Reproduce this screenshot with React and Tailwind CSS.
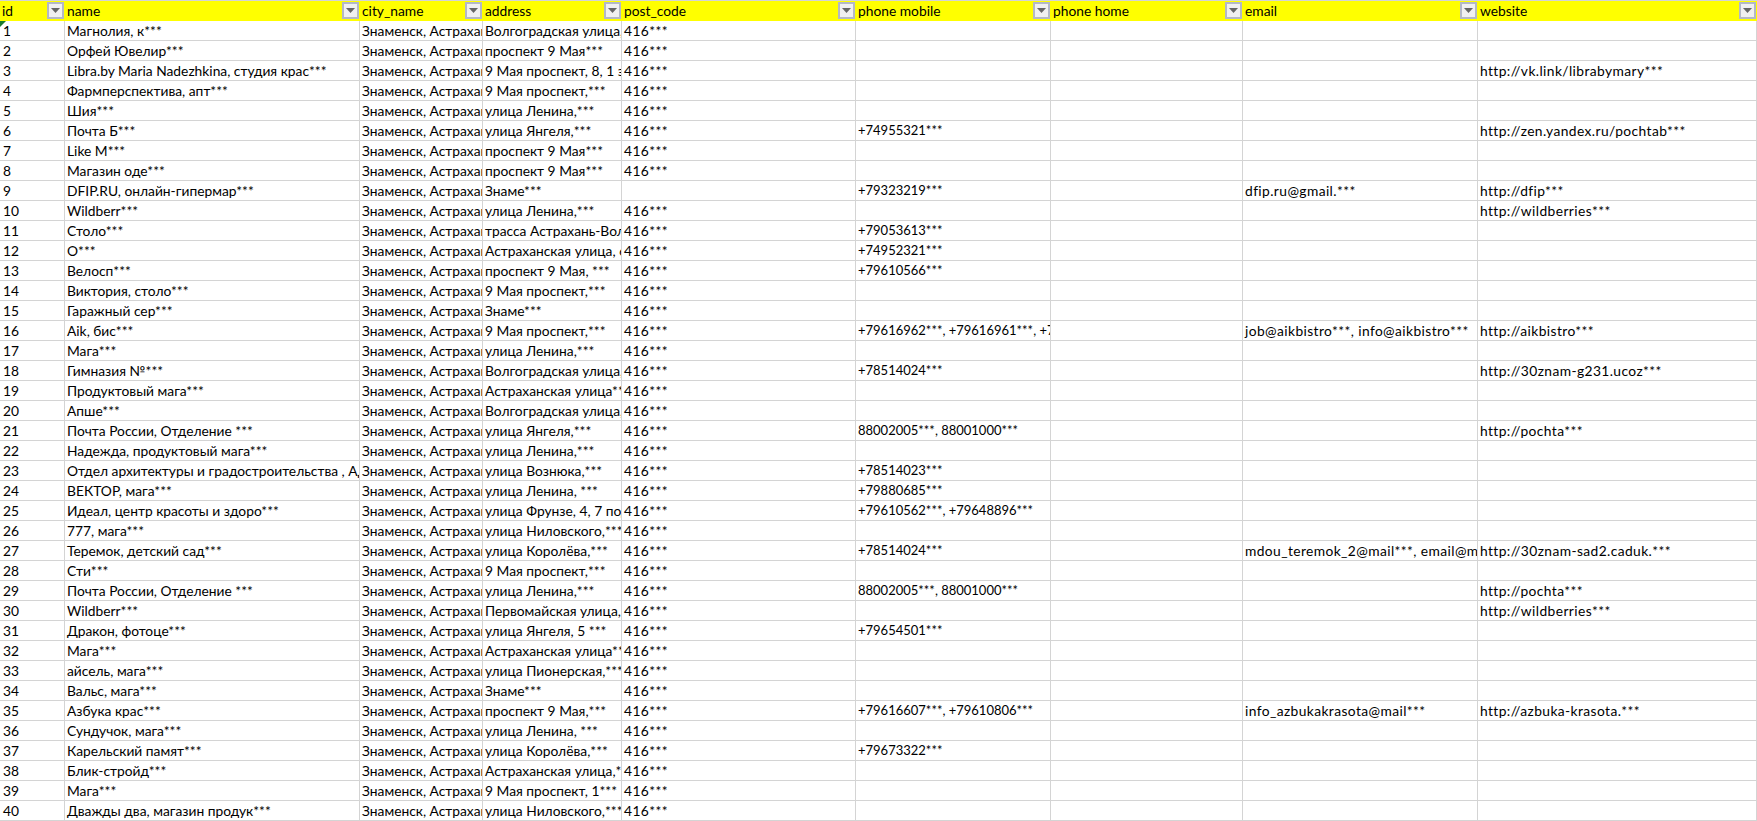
const cols = [
  ['id', 65],
  ['name', 295],
  ['city_name', 123],
  ['address', 139],
  ['post_code', 234],
  ['phone mobile', 195],
  ['phone home', 192],
  ['email', 235],
  ['website', 279],
];

const CITY = 'Знаменск, Астраханская область';

// name, address, post, mobile, email, website
const rows = [
  ['Магнолия, к***', 'Волгоградская улица,***', '416***', '', '', ''],
  ['Орфей Ювелир***', 'проспект 9 Мая***', '416***', '', '', ''],
  ['Libra.by Maria Nadezhkina, студия крас***', '9 Мая проспект, 8, 1 этаж***', '416***', '', '', 'http://vk.link/librabymary***'],
  ['Фармперспектива, апт***', '9 Мая проспект,***', '416***', '', '', ''],
  ['Шия***', 'улица Ленина,***', '416***', '', '', ''],
  ['Почта Б***', 'улица Янгеля,***', '416***', '+74955321***', '', 'http://zen.yandex.ru/pochtab***'],
  ['Like M***', 'проспект 9 Мая***', '416***', '', '', ''],
  ['Магазин оде***', 'проспект 9 Мая***', '416***', '', '', ''],
  ['DFIP.RU, онлайн-гипермар***', 'Знаме***', '', '+79323219***', 'dfip.ru@gmail.***', 'http://dfip***'],
  ['Wildberr***', 'улица Ленина,***', '416***', '', '', 'http://wildberries***'],
  ['Столо***', 'трасса Астрахань-Волгоград***', '416***', '+79053613***', '', ''],
  ['О***', 'Астраханская улица, 6***', '416***', '+74952321***', '', ''],
  ['Велосп***', 'проспект 9 Мая, ***', '416***', '+79610566***', '', ''],
  ['Виктория, столо***', '9 Мая проспект,***', '416***', '', '', ''],
  ['Гаражный сер***', 'Знаме***', '416***', '', '', ''],
  ['Aik, бис***', '9 Мая проспект,***', '416***', '+79616962***, +79616961***, +79***', 'job@aikbistro***, info@aikbistro***', 'http://aikbistro***'],
  ['Мага***', 'улица Ленина,***', '416***', '', '', ''],
  ['Гимназия №***', 'Волгоградская улица,***', '416***', '+78514024***', '', 'http://30znam-g231.ucoz***'],
  ['Продуктовый мага***', 'Астраханская улица***', '416***', '', '', ''],
  ['Апше***', 'Волгоградская улица,***', '416***', '', '', ''],
  ['Почта России, Отделение ***', 'улица Янгеля,***', '416***', '88002005***, 88001000***', '', 'http://pochta***'],
  ['Надежда, продуктовый мага***', 'улица Ленина,***', '416***', '', '', ''],
  ['Отдел архитектуры и градостроительства , Администрация', 'улица Вознюка,***', '416***', '+78514023***', '', ''],
  ['ВЕКТОР, мага***', 'улица Ленина, ***', '416***', '+79880685***', '', ''],
  ['Идеал, центр красоты и здоро***', 'улица Фрунзе, 4, 7 подъезд', '416***', '+79610562***, +79648896***', '', ''],
  ['777, мага***', 'улица Ниловского,***', '416***', '', '', ''],
  ['Теремок, детский сад***', 'улица Королёва,***', '416***', '+78514024***', 'mdou_teremok_2@mail***, email@mail***', 'http://30znam-sad2.caduk.***'],
  ['Сти***', '9 Мая проспект,***', '416***', '', '', ''],
  ['Почта России, Отделение ***', 'улица Ленина,***', '416***', '88002005***, 88001000***', '', 'http://pochta***'],
  ['Wildberr***', 'Первомайская улица,***', '416***', '', '', 'http://wildberries***'],
  ['Дракон, фотоце***', 'улица Янгеля, 5 ***', '416***', '+79654501***', '', ''],
  ['Мага***', 'Астраханская улица***', '416***', '', '', ''],
  ['айсель, мага***', 'улица Пионерская,***', '416***', '', '', ''],
  ['Вальс, мага***', 'Знаме***', '416***', '', '', ''],
  ['Азбука крас***', 'проспект 9 Мая,***', '416***', '+79616607***, +79610806***', 'info_azbukakrasota@mail***', 'http://azbuka-krasota.***'],
  ['Сундучок, мага***', 'улица Ленина, ***', '416***', '', '', ''],
  ['Карельский памят***', 'улица Королёва,***', '416***', '+79673322***', '', ''],
  ['Блик-стройд***', 'Астраханская улица,***', '416***', '', '', ''],
  ['Мага***', '9 Мая проспект, 1***', '416***', '', '', ''],
  ['Дважды два, магазин продук***', 'улица Ниловского,***', '416***', '', '', ''],
];

const FilterButton = () => (
  <span className="flex h-[17px] w-[17px] shrink-0 items-center justify-center border-2 border-[#b3b8c6] bg-[#f0f0f0]">
    <svg width="9" height="5" viewBox="0 0 9 5"><path d="M0 0h9L4.5 5z" fill="#666" /></svg>
  </span>
);

const Cell = ({ width, className = '', children }) => (
  <div
    className={`h-5 shrink-0 overflow-hidden whitespace-nowrap border-r border-b border-[#d4d4d4] pl-[2px] leading-[19px] ${className}`}
    style={{ width }}
  >
    {children}
  </div>
);

export default function App() {
  return (
    <div className="relative h-[821px] w-[1757px] overflow-hidden bg-white font-['Lato','Open_Sans',sans-serif] text-[13.8px] text-black">
      {/* header row */}
      <div className="flex h-[21px] border-t border-[#d4d4d4] bg-[#ffff00]">
        {cols.map(([title, w]) => (
          <div key={title} className="flex shrink-0 items-start justify-between pl-[2px] pr-[1px] pt-[1px]" style={{ width: w }}>
            <span className="whitespace-nowrap leading-[18px]">{title}</span>
            <FilterButton />
          </div>
        ))}
      </div>
      {rows.map((r, i) => (
        <div key={i} className="flex">
          <Cell width={cols[0][1]} className="pl-[3px]">{i + 1}</Cell>
          <Cell width={cols[1][1]}>{r[0]}</Cell>
          <Cell width={cols[2][1]}>{CITY}</Cell>
          <Cell width={cols[3][1]}>{r[1]}</Cell>
          <Cell width={cols[4][1]} className="tracking-[0.4px]">{r[2]}</Cell>
          <Cell width={cols[5][1]} className="text-[13px]">{r[3]}</Cell>
          <Cell width={cols[6][1]}></Cell>
          <Cell width={cols[7][1]} className="tracking-[0.4px]">{r[4]}</Cell>
          <Cell width={cols[8][1]} className="tracking-[0.4px]">{r[5]}</Cell>
        </div>
      ))}
      {/* green error marker on the first cell */}
      <div className="absolute left-0 top-[21px] h-0 w-0 border-r-[6px] border-t-[6px] border-r-transparent border-t-[#1a7a2e]" />
    </div>
  );
}
